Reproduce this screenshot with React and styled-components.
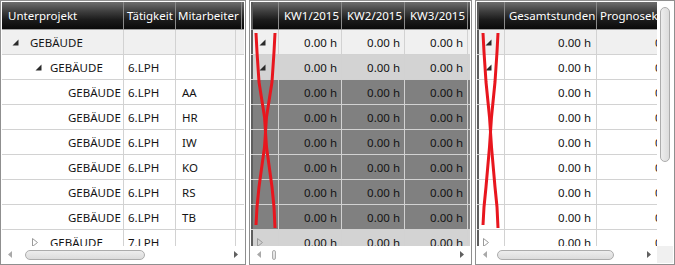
import React from 'react'
import styled, { createGlobalStyle } from 'styled-components'

const GlobalStyle = createGlobalStyle`
  html, body {
    margin: 0;
    padding: 0;
    background: #fff;
  }
  body {
    font-family: "Noto Sans", "Open Sans", sans-serif;
    font-size: 11.5px;
  }
`

// data
const treeRows = [
  { id: 1, level: 0, open: true, name: 'GEBÄUDE', task: '', who: '' },
  { id: 2, level: 1, open: true, name: 'GEBÄUDE', task: '6.LPH', who: '' },
  { id: 3, level: 2, name: 'GEBÄUDE', task: '6.LPH', who: 'AA' },
  { id: 4, level: 2, name: 'GEBÄUDE', task: '6.LPH', who: 'HR' },
  { id: 5, level: 2, name: 'GEBÄUDE', task: '6.LPH', who: 'IW' },
  { id: 6, level: 2, name: 'GEBÄUDE', task: '6.LPH', who: 'KO' },
  { id: 7, level: 2, name: 'GEBÄUDE', task: '6.LPH', who: 'RS' },
  { id: 8, level: 2, name: 'GEBÄUDE', task: '6.LPH', who: 'TB' },
  { id: 9, level: 1, open: false, name: 'GEBÄUDE', task: '7.LPH', who: '' },
]

const weekBg = ['#f0f0f0', '#d3d3d3', '#808080', '#808080', '#808080', '#808080', '#808080', '#808080', '#d3d3d3']
const totalBg = ['#f0f0f0', '#fff', '#fff', '#fff', '#fff', '#fff', '#fff', '#fff', '#fff']

// left padding and toggle slot per tree level
const treeIndent = { 0: 8, 1: 30, 2: 66 }
const toggleSlot = { 0: 20, 1: 18 }

const Expanded = () => (
  <svg width="7" height="7" viewBox="0 0 7 7">
    <path d="M6.5 0.5 L6.5 6.5 L0.5 6.5 Z" fill="#2a2a2a" />
  </svg>
)

const Collapsed = () => (
  <svg width="6" height="9" viewBox="0 0 6 9">
    <path d="M0.5 0.5 L5.5 4.5 L0.5 8.5 Z" fill="none" stroke="#9a9a9a" />
  </svg>
)

const Toggle = ({ open, slot = 18, off = 0 }) => {
  if (open === undefined) return null
  return (
    <ToggleSlot $w={slot} $off={open ? off : 0}>
      {open ? <Expanded /> : <Collapsed />}
    </ToggleSlot>
  )
}

const RedCross = ({ x1, x2 }) => {
  const m = (x1 + x2) / 2
  return (
    <CrossLayer width="40" height="244" viewBox="0 0 40 244">
      <polyline
        points={`${x1},31 ${x1 + 1},50 ${x1 + 3},80 ${m - 1},115 ${m + 1},145 ${x2 - 3},185 ${x2 - 1},205 ${x2},226`}
        fill="none" stroke="#e8161e" strokeWidth="3" strokeLinejoin="round"
      />
      <polyline
        points={`${x2},31 ${x2 - 1},50 ${x2 - 3},80 ${m + 1},115 ${m - 1},145 ${x1 + 3},185 ${x1 + 1},205 ${x1},223`}
        fill="none" stroke="#e8161e" strokeWidth="3" strokeLinejoin="round"
      />
    </CrossLayer>
  )
}

const HScroll = ({ thumbLeft, thumbWidth, leftDim }) => (
  <HBar>
    <ArrowBox>
      <svg width="4" height="7" viewBox="0 0 4 7"><path d="M4 0 L0 3.5 L4 7 Z" fill={leftDim ? '#a9a9a9' : '#606060'} /></svg>
    </ArrowBox>
    <Lane>
      <HThumb $left={thumbLeft} $w={thumbWidth} />
    </Lane>
    <ArrowBox>
      <svg width="4" height="7" viewBox="0 0 4 7"><path d="M0 0 L4 3.5 L0 7 Z" fill="#606060" /></svg>
    </ArrowBox>
  </HBar>
)

const App = () => {
  return (
    <>
      <GlobalStyle />
      <Page>
        {/* tree part */}
        <Panel $w={246}>
          <Viewport>
            <HeaderRow>
              <HeadCell $w={122} $pl={6}>Unterprojekt</HeadCell>
              <HeadCell $w={52} $pl={3}>Tätigkeit</HeadCell>
              <HeadCell $w={66} $pl={2}>Mitarbeiter</HeadCell>
              <HeadFill />
            </HeaderRow>
            {treeRows.map((r, i) => (
              <Row key={r.id} $bg={i === 0 ? '#f0f0f0' : '#fff'}>
                <Cell $w={122} $pl={treeIndent[r.level]}>
                  <Toggle open={r.open} slot={toggleSlot[r.level]} off={r.level === 1 ? 3 : 2} />
                  {r.name}
                </Cell>
                <Cell $w={52} $pl={4}>{r.task}</Cell>
                <Cell $w={60} $pl={6}>{r.who}</Cell>
                <Fill />
              </Row>
            ))}
          </Viewport>
          <HScroll thumbLeft={7} thumbWidth={120} leftDim />
        </Panel>

        {/* weeks */}
        <Panel $w={223}>
          <Viewport>
            <HeaderRow>
              <HeadCell $w={28} $ind />
              <HeadCell $w={63} $pl={5}>KW1/2015</HeadCell>
              <HeadCell $w={63} $pl={5}>KW2/2015</HeadCell>
              <HeadCell $w={63} $pl={5}>KW3/2015</HeadCell>
              <HeadFill />
            </HeaderRow>
            {treeRows.map((r, i) => (
              <Row key={r.id} $bg={weekBg[i]}>
                <IndCell $pl={r.open === false ? 6 : 8}><Toggle open={r.open} /></IndCell>
                <Cell $w={63} $right>0.00 h</Cell>
                <Cell $w={63} $right>0.00 h</Cell>
                <Cell $w={63} $right>0.00 h</Cell>
                <Fill />
              </Row>
            ))}
            <RedCross x1={5} x2={24} />
          </Viewport>
          <HScroll thumbLeft={5} thumbWidth={4} leftDim />
        </Panel>

        {/* totals */}
        <Panel $w={200}>
          <Split>
            <Main>
              <Viewport>
                <HeaderRow>
                  <HeadCell $w={28} $ind />
                  <HeadCell $w={92} $pl={4}>Gesamtstunden</HeadCell>
                  <HeadCell $w={96} $pl={3}>Prognosekosten</HeadCell>
                </HeaderRow>
                {treeRows.map((r, i) => (
                  <Row key={r.id} $bg={totalBg[i]}>
                    <IndCell $pl={r.open === false ? 6 : 8}><Toggle open={r.open} /></IndCell>
                    <Cell $w={92} $pr={5} $right>0.00 h</Cell>
                    <Cell $w={96} $right>0.00 h</Cell>
                  </Row>
                ))}
                <RedCross x1={6} x2={21} />
              </Viewport>
              <HScroll thumbLeft={4} thumbWidth={117} leftDim />
            </Main>
            <Side>
              <VTrack>
                <VThumb />
              </VTrack>
              <Corner />
            </Side>
          </Split>
        </Panel>
      </Page>
    </>
  )
}

//STYLED COMPONENTS
const Page = styled.div`
  width: 675px;
  height: 265px;
  display: flex;
  gap: 3px;
  background: #fff;
`

const Panel = styled.div`
  width: ${p => p.$w}px;
  height: 265px;
  flex: none;
  box-sizing: border-box;
  border: 1px solid #8f8f8f;
  padding: 1px;
  display: flex;
  flex-direction: column;
  background: #fff;
`

const Split = styled.div`
  flex: 1;
  display: flex;
  min-height: 0;
`

const Main = styled.div`
  flex: 1;
  min-width: 0;
  display: flex;
  flex-direction: column;
`

const Side = styled.div`
  width: 16px;
  flex: none;
  display: flex;
  flex-direction: column;
`

const Viewport = styled.div`
  flex: 1;
  min-height: 0;
  overflow: hidden;
  position: relative;
`

const HeaderRow = styled.div`
  display: flex;
  height: 28px;
  box-sizing: border-box;
  border-bottom: 1px solid #a0a0a0;
  background: linear-gradient(to bottom, #6e6e6e 0%, #3e3e3e 35%, #1c1c1c 65%, #0a0a0a 100%);
`

const HeadCell = styled.div`
  flex: none;
  width: ${p => p.$w}px;
  box-sizing: border-box;
  border-right: 1px solid #8a8a8a;
  border-left: ${p => (p.$ind ? '2px solid #5a5a5a' : 'none')};
  padding-left: ${p => p.$pl || 0}px;
  display: flex;
  align-items: center;
  color: #fff;
  white-space: nowrap;
  overflow: hidden;
`

const HeadFill = styled.div`
  flex: 1;
`

const Row = styled.div`
  display: flex;
  height: 25px;
  box-sizing: border-box;
  border-bottom: 1px solid #d2d2d2;
  background: ${p => p.$bg};
`

const Cell = styled.div`
  flex: none;
  width: ${p => p.$w}px;
  box-sizing: border-box;
  border-right: 1px solid #d2d2d2;
  padding-left: ${p => p.$pl || 0}px;
  padding-right: ${p => (p.$pr ?? 4)}px;
  display: flex;
  align-items: center;
  justify-content: ${p => (p.$right ? 'flex-end' : 'flex-start')};
  color: #141414;
  white-space: nowrap;
  overflow: hidden;
`

const IndCell = styled.div`
  flex: none;
  width: 28px;
  box-sizing: border-box;
  border-left: 2px solid #5e5e5e;
  border-right: 1px solid #d2d2d2;
  padding-left: ${p => p.$pl - 2}px;
  display: flex;
  align-items: center;
`

const Fill = styled.div`
  flex: 1;
`

const ToggleSlot = styled.span`
  width: ${p => p.$w}px;
  flex: none;
  box-sizing: border-box;
  padding-left: ${p => p.$off}px;
  display: flex;
  align-items: center;
`

const CrossLayer = styled.svg`
  position: absolute;
  left: 0;
  top: 0;
  pointer-events: none;
`

const HBar = styled.div`
  height: 17px;
  flex: none;
  display: flex;
  align-items: center;
  background: #fff;
`

const ArrowBox = styled.div`
  width: 16px;
  height: 17px;
  flex: none;
  display: flex;
  align-items: center;
  justify-content: center;
`

const Lane = styled.div`
  flex: 1;
  display: flex;
  align-items: center;
  height: 17px;
`

const HThumb = styled.div`
  margin-left: ${p => p.$left}px;
  width: ${p => p.$w}px;
  height: 10px;
  box-sizing: border-box;
  border: 1px solid #acacac;
  border-radius: 5px;
  background: linear-gradient(to bottom, #ededed, #dcdcdc);
`

const VTrack = styled.div`
  flex: 1;
  background: #fff;
  display: flex;
  flex-direction: column;
  align-items: center;
  padding-top: 5px;
`

const VThumb = styled.div`
  width: 10px;
  height: 155px;
  box-sizing: border-box;
  border: 1px solid #acacac;
  border-radius: 5px;
  background: linear-gradient(to right, #ededed, #dcdcdc);
`

const Corner = styled.div`
  height: 17px;
  flex: none;
  background: #f0f0f0;
`

export default App
